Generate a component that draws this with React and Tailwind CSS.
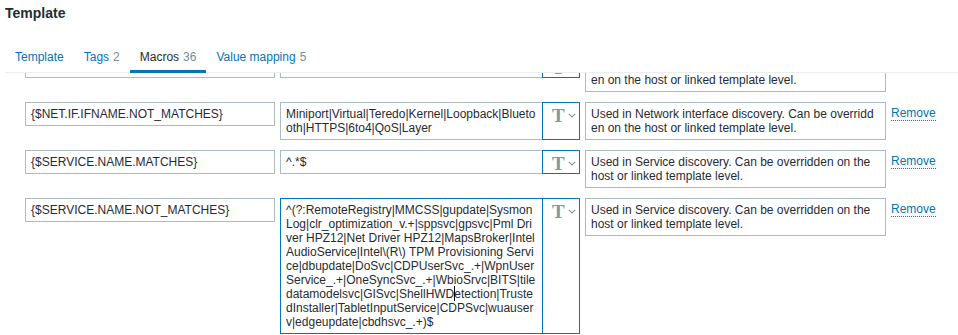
import React from "react";

const tabs = [
  { label: "Template" },
  { label: "Tags", count: 2 },
  { label: "Macros", count: 36, active: true },
  { label: "Value mapping", count: 5 },
];

const macros = [
  {
    macro: "{$NET.IF.IFNAME.MATCHES}",
    value: "^.*$",
    description:
      "Used in Network interface discovery. Can be overridden on the host or linked template level.",
  },
  {
    macro: "{$NET.IF.IFNAME.NOT_MATCHES}",
    value:
      "Miniport|Virtual|Teredo|Kernel|Loopback|Bluetooth|HTTPS|6to4|QoS|Layer",
    description:
      "Used in Network interface discovery. Can be overridden on the host or linked template level.",
  },
  {
    macro: "{$SERVICE.NAME.MATCHES}",
    value: "^.*$",
    description:
      "Used in Service discovery. Can be overridden on the host or linked template level.",
  },
  {
    macro: "{$SERVICE.NAME.NOT_MATCHES}",
    value:
      "^(?:RemoteRegistry|MMCSS|gupdate|SysmonLog|clr_optimization_v.+|sppsvc|gpsvc|Pml Driver HPZ12|Net Driver HPZ12|MapsBroker|IntelAudioService|Intel\\(R\\) TPM Provisioning Service|dbupdate|DoSvc|CDPUserSvc_.+|WpnUserService_.+|OneSyncSvc_.+|WbioSrvc|BITS|tiledatamodelsvc|GISvc|ShellHWD",
    valueTail:
      "etection|TrustedInstaller|TabletInputService|CDPSvc|wuauserv|edgeupdate|cbdhsvc_.+)$",
    description:
      "Used in Service discovery. Can be overridden on the host or linked template level.",
    focused: true,
  },
];

function TypeButton() {
  return (
    <div className="-ml-px flex w-[38px] shrink-0 items-start gap-[3px] border border-[#0275b8] bg-white pl-[9px] pt-[3px]">
      <span className="font-['Liberation_Serif',serif] text-[19px] font-bold leading-[19px] text-[#8497a3]">
        T
      </span>
      <svg
        width="8"
        height="5"
        viewBox="0 0 8 5"
        className="mt-[7px]"
        fill="none"
        stroke="#8a9aa5"
        strokeWidth="1.2"
      >
        <path d="M0.8 0.8 L4 4 L7.2 0.8" />
      </svg>
    </div>
  );
}

function MacroRow({ row }) {
  return (
    <div className="flex items-start gap-[5px]">
      <div className="h-[24px] w-[250px] shrink-0 border border-[#acbbc2] px-[5px] py-[4px] leading-[14px]">
        {row.macro}
      </div>

      <div className="flex shrink-0">
        <div
          className={`w-[263px] break-all border px-[5px] py-[4px] leading-[14px] ${
            row.focused ? "border-[#0275b8]" : "border-[#acbbc2]"
          }`}
        >
          {row.value}
          {row.valueTail && (
            <>
              <span className="relative">
                <span className="absolute -top-[1px] left-0 h-[15px] w-px bg-black" />
              </span>
              {row.valueTail}
            </>
          )}
        </div>
        <TypeButton />
      </div>

      <div className="w-[301px] shrink-0 break-all border border-[#acbbc2] px-[5px] py-[4px] leading-[14px]">
        {row.description}
      </div>

      <div className="pt-[4px] leading-[14px]">
        <span className="cursor-pointer border-b border-dotted border-[#0275b8] text-[#0275b8]">
          Remove
        </span>
      </div>
    </div>
  );
}

export default function App() {
  return (
    <div className="h-[335px] w-[958px] overflow-hidden bg-white pl-[5px] font-['Liberation_Sans',Arial,sans-serif] text-[12px] text-[#1f2c33]">
      <header className="h-[42px] pt-[5px]">
        <h1 className="text-[14px] font-bold leading-[16px] text-[#1f2c33]">
          Template
        </h1>
      </header>

      <nav className="flex h-[31px] border-b border-[#ebeef0]">
        {tabs.map((tab) => (
          <div
            key={tab.label}
            className={`-mb-px flex h-[31px] items-center border-b-[3px] px-[10px] pt-[2px] leading-[14px] ${
              tab.active
                ? "border-[#0275b8] text-[#1f2c33]"
                : "border-transparent text-[#0275b8]"
            }`}
          >
            {tab.label}
            {tab.count !== undefined && (
              <span className="ml-[4px] text-[#768d99]">{tab.count}</span>
            )}
          </div>
        ))}
      </nav>

      <main className="h-[262px] overflow-hidden pl-[20px]">
        <div className="-mt-[19px] flex flex-col gap-[10px]">
          {macros.map((row) => (
            <MacroRow key={row.macro} row={row} />
          ))}
        </div>
      </main>
    </div>
  );
}
